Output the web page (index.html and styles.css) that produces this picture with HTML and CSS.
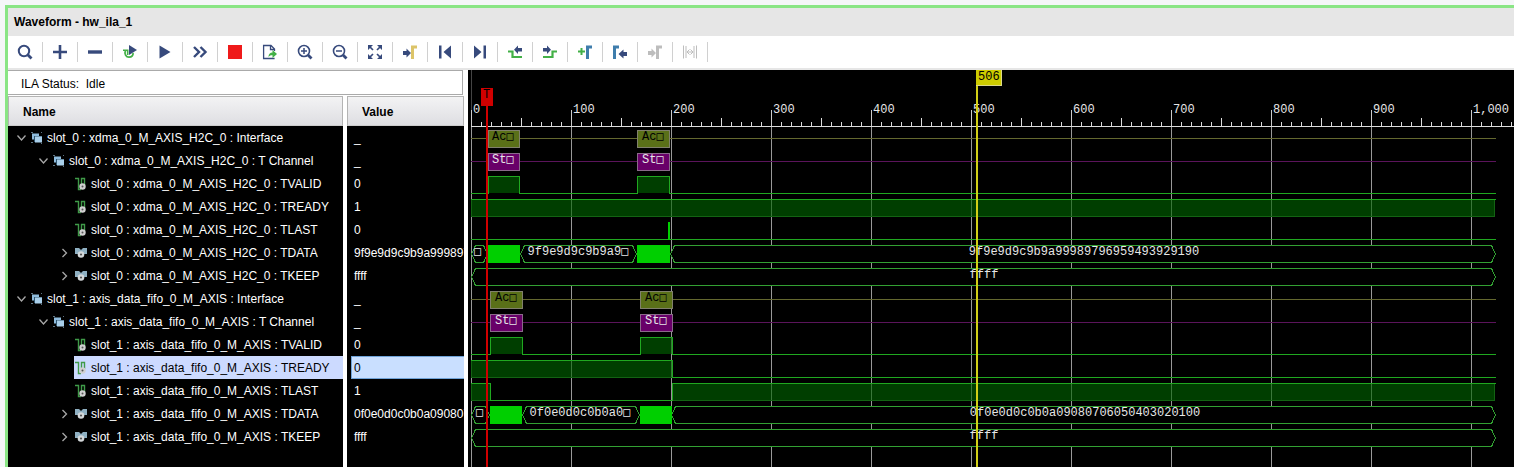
FILE: index.html
```html
<!DOCTYPE html>
<html lang="en">
<head>
<meta charset="utf-8">
<title>Waveform - hw_ila_1</title>
<link rel="stylesheet" href="styles.css">
</head>
<body>
<svg class="defs" aria-hidden="true">
  <symbol id="open" viewBox="0 0 14 14"><path d="M1.500 4.500 5.500 9 9.500 4.500" fill="none" stroke="#a8a8a8" stroke-width="1.300"/></symbol>
  <symbol id="closed" viewBox="0 0 14 14"><path d="M2.500 3 6.500 7 2.500 11" fill="none" stroke="#a8a8a8" stroke-width="1.300"/></symbol>
  <symbol id="group" viewBox="0 0 14 14">
    <path d="M1 1h2v1H1zM11 1h1v1h-1zM1 11h2v1H1zM11 12h1v1h-1z" fill="#5f7482"/>
    <rect x="2" y="2.500" width="7" height="6" fill="#8ebbdc"/>
    <path d="M4 5h8v1H5v5H4z" fill="#2f556f"/>
    <rect x="5" y="5.500" width="7" height="6" fill="#a9cfea"/>
  </symbol>
  <symbol id="signal" viewBox="0 0 14 14">
    <path d="M1 1.500H4.500V12.500H7M7.500 8V1.500h3V8" fill="none" stroke="#3f9a48" stroke-width="1.400"/>
    <circle cx="8.500" cy="9.500" r="3.200" fill="#d0d0d0"/><circle cx="8.500" cy="9.500" r="1" fill="#555"/>
  </symbol>
  <symbol id="bus" viewBox="0 0 14 14">
    <path d="M1 2h4l2 2 2-2h4v6H9l-1 3H6L4 8H1z" fill="#8fb0c2"/>
    <circle cx="7" cy="8.500" r="3.300" fill="#d4d8da"/><circle cx="7" cy="8.500" r="1.100" fill="#555"/>
  </symbol>
  <symbol id="edge" viewBox="0 0 16 16"><path d="M10.500 15V3H15" fill="none" stroke="currentColor" stroke-width="3"/></symbol>
  <symbol id="arrow" viewBox="0 0 16 16"><path d="M1 7h3.500V4.500L9 9l-4.500 4.500V11H1z" fill="currentColor"/></symbol>
</svg>

<main class="window">
  <h1 class="title">Waveform - hw_ila_1</h1>
  <ul class="toolbar">
    <li><button aria-label="Find"><svg viewBox="0 0 16 16"><circle cx="7" cy="7" r="5.200"/><path d="M10.500 10.500 14.500 14.500" stroke-width="2.800"/></svg></button></li>
    <li><button aria-label="Add"><svg viewBox="0 0 16 16"><path d="M1 8h14M8 1v14" stroke-width="2.600"/></svg></button></li>
    <li><button aria-label="Remove"><svg viewBox="0 0 16 16"><path d="M1 8h14" stroke-width="3.400"/></svg></button></li>
    <li><button aria-label="Auto re-trigger"><svg viewBox="0 0 16 16"><path class="solid" d="M7 1 15 6 7 11z"/><path class="green" d="M3.500 6.500C2 10 4 13.200 7 13.200S11.300 11 11 9" stroke-width="1.800"/><path class="green" d="M1 6.300h4.700V11" stroke-width="1.600"/></svg></button></li>
    <li><button aria-label="Run trigger"><svg viewBox="0 0 16 16"><path class="solid" d="M2.500 1.500 13.500 8 2.500 14.500z"/></svg></button></li>
    <li><button aria-label="Run immediate"><svg viewBox="0 0 16 16"><path d="M2 3 7 8 2 13M8.500 3l5 5-5 5" stroke-width="2.400"/></svg></button></li>
    <li><button aria-label="Stop trigger"><svg viewBox="0 0 16 16"><rect class="red" x="1" y="1" width="14" height="14"/></svg></button></li>
    <li><button aria-label="Export data"><svg viewBox="0 0 16 16"><path d="M12.500 7V5L9 1.500H1.600v13h11M8.500 1.500v4h4" stroke-width="1.300"/><path class="green-solid" d="M6.500 13c0-3 1.500-4.500 4-4.500V6l4.500 4-4.500 4v-2.700c-1.800 0-3 .4-4 1.700z"/></svg></button></li>
    <li><button aria-label="Zoom in"><svg viewBox="0 0 16 16"><circle cx="7" cy="7" r="5.500" stroke-width="1.600"/><path d="M4 7h6M7 4v6" stroke-width="1.500"/><path d="M11 11l3.500 3.500" stroke-width="2.800"/></svg></button></li>
    <li><button aria-label="Zoom out"><svg viewBox="0 0 16 16"><circle cx="7" cy="7" r="5.500" stroke-width="1.600"/><path d="M4 7h6" stroke-width="1.500"/><path d="M11 11l3.500 3.500" stroke-width="2.800"/></svg></button></li>
    <li><button aria-label="Zoom fit"><svg viewBox="0 0 16 16"><path d="M2 2l4 4M14 2l-4 4M2 14l4-4M14 14l-4-4" stroke-width="1.700"/><path class="solid" d="M1 1h5L1 6zM15 1h-5l5 5zM1 15h5L1 10zM15 15h-5l5-5z"/></svg></button></li>
    <li><button aria-label="Go to trigger"><svg viewBox="0 0 16 16"><use href="#arrow"/><use href="#edge" class="c-yellow"/></svg></button></li>
    <li><button aria-label="Go to start"><svg viewBox="0 0 16 16"><path class="solid" d="M2 1.500h2.500v13H2zM14 1.500v13L6.500 8z"/></svg></button></li>
    <li><button aria-label="Go to end"><svg viewBox="0 0 16 16"><path class="solid" d="M11.500 1.500H14v13h-2.500zM2 1.500v13L9.500 8z"/></svg></button></li>
    <li><button aria-label="Previous transition"><svg viewBox="0 0 16 16"><path class="green" d="M1 7.500h4.500V13H15" stroke-width="2.200"/><path class="solid" d="M15 4h-4V1.500L7 5.700l4 4.200V7.500h4z"/></svg></button></li>
    <li><button aria-label="Next transition"><svg viewBox="0 0 16 16"><path class="green" d="M1 13h9.500V7.500H15" stroke-width="2.200"/><path class="solid" d="M1 4h4V1.500l4 4.200-4 4.200V7.500H1z"/></svg></button></li>
    <li><button aria-label="Add marker"><svg viewBox="0 0 16 16"><path class="green" d="M1 7.500h7M4.500 4v7" stroke-width="2"/><use href="#edge" class="c-steel"/></svg></button></li>
    <li><button aria-label="Previous marker"><svg viewBox="0 0 16 16"><path class="steel" d="M2.500 15V3H7" stroke-width="3"/><path class="solid" d="M15 8h-3.500V5.500L6.500 10l5 4.500V12H15z"/></svg></button></li>
    <li><button aria-label="Next marker" disabled><svg viewBox="0 0 16 16"><use href="#arrow"/><use href="#edge"/></svg></button></li>
    <li><button aria-label="Swap cursors" disabled><svg viewBox="0 0 16 16"><path d="M1.500 1.500v13M4 2v12M14.500 1.500v13M12 2v12M5 8h6M7.500 5.500 5 8l2.500 2.500M8.500 5.500 11 8l-2.500 2.500" stroke-width="1"/></svg></button></li>
  </ul>

  <div class="content">
    <section class="names">
      <p class="status">ILA Status:&nbsp; Idle</p>
      <table>
        <colgroup><col class="name-col"><col></colgroup>
        <thead><tr><th><div>Name</div></th><th><div>Value</div></th></tr></thead>
        <tbody>
          <tr><td><div class="node l0"><svg><use href="#open"/></svg><span><svg><use href="#group"/></svg>slot_0 : xdma_0_M_AXIS_H2C_0 : Interface</span></div></td><td><div class="value">_</div></td></tr>
          <tr><td><div class="node l1"><svg><use href="#open"/></svg><span><svg><use href="#group"/></svg>slot_0 : xdma_0_M_AXIS_H2C_0 : T Channel</span></div></td><td><div class="value">_</div></td></tr>
          <tr><td><div class="node l2"><svg></svg><span><svg><use href="#signal"/></svg>slot_0 : xdma_0_M_AXIS_H2C_0 : TVALID</span></div></td><td><div class="value">0</div></td></tr>
          <tr><td><div class="node l2"><svg></svg><span><svg><use href="#signal"/></svg>slot_0 : xdma_0_M_AXIS_H2C_0 : TREADY</span></div></td><td><div class="value">1</div></td></tr>
          <tr><td><div class="node l2"><svg></svg><span><svg><use href="#signal"/></svg>slot_0 : xdma_0_M_AXIS_H2C_0 : TLAST</span></div></td><td><div class="value">0</div></td></tr>
          <tr><td><div class="node l2"><svg><use href="#closed"/></svg><span><svg><use href="#bus"/></svg>slot_0 : xdma_0_M_AXIS_H2C_0 : TDATA</span></div></td><td><div class="value">9f9e9d9c9b9a999897</div></td></tr>
          <tr><td><div class="node l2"><svg><use href="#closed"/></svg><span><svg><use href="#bus"/></svg>slot_0 : xdma_0_M_AXIS_H2C_0 : TKEEP</span></div></td><td><div class="value">ffff</div></td></tr>
          <tr><td><div class="node l0"><svg><use href="#open"/></svg><span><svg><use href="#group"/></svg>slot_1 : axis_data_fifo_0_M_AXIS : Interface</span></div></td><td><div class="value">_</div></td></tr>
          <tr><td><div class="node l1"><svg><use href="#open"/></svg><span><svg><use href="#group"/></svg>slot_1 : axis_data_fifo_0_M_AXIS : T Channel</span></div></td><td><div class="value">_</div></td></tr>
          <tr><td><div class="node l2"><svg></svg><span><svg><use href="#signal"/></svg>slot_1 : axis_data_fifo_0_M_AXIS : TVALID</span></div></td><td><div class="value">0</div></td></tr>
          <tr class="selected"><td><div class="node l2"><svg></svg><span><svg><use href="#signal"/></svg>slot_1 : axis_data_fifo_0_M_AXIS : TREADY</span></div></td><td><div class="value">0</div></td></tr>
          <tr><td><div class="node l2"><svg></svg><span><svg><use href="#signal"/></svg>slot_1 : axis_data_fifo_0_M_AXIS : TLAST</span></div></td><td><div class="value">1</div></td></tr>
          <tr><td><div class="node l2"><svg><use href="#closed"/></svg><span><svg><use href="#bus"/></svg>slot_1 : axis_data_fifo_0_M_AXIS : TDATA</span></div></td><td><div class="value">0f0e0d0c0b0a090807</div></td></tr>
          <tr><td><div class="node l2"><svg><use href="#closed"/></svg><span><svg><use href="#bus"/></svg>slot_1 : axis_data_fifo_0_M_AXIS : TKEEP</span></div></td><td><div class="value">ffff</div></td></tr>
          <tr class="rest"><td></td><td></td></tr>
        </tbody>
      </table>
    </section>

    <svg class="wave" role="img" aria-label="Captured waveform">
      <defs>
        <pattern id="minor" x="3" y="52" width="10" height="4" patternUnits="userSpaceOnUse"><rect width="1" height="4" fill="#ddd"/></pattern>
        <pattern id="half" x="3" y="48" width="50" height="8" patternUnits="userSpaceOnUse"><rect width="1" height="8" fill="#ddd"/></pattern>
        <pattern id="major" x="3" y="40" width="100" height="16" patternUnits="userSpaceOnUse"><rect width="1" height="16" fill="#ccc"/></pattern>
        <pattern id="grid" x="3" y="0" width="100" height="100" patternUnits="userSpaceOnUse"><rect width="1" height="100" fill="#999"/></pattern>
      </defs>
      <rect x="3" width="1" height="100%" fill="#444"/>
      <!-- ruler -->
      <rect x="3" y="52" width="100%" height="4" fill="url(#minor)"/>
      <rect x="3" y="48" width="100%" height="8" fill="url(#half)"/>
      <rect x="3" y="40" width="100%" height="16" fill="url(#major)"/>
      <rect x="3" y="56" width="100%" height="1" fill="#ddd"/>
      <rect x="3" y="57" width="100%" height="100%" fill="url(#grid)"/>
      <g class="ruler-text">
        <text x="5" y="43">0</text><text x="105" y="43">100</text><text x="205" y="43">200</text><text x="305" y="43">300</text><text x="405" y="43">400</text><text x="505" y="43">500</text><text x="605" y="43">600</text><text x="705" y="43">700</text><text x="805" y="43">800</text><text x="905" y="43">900</text><text x="1005" y="43">1,000</text>
      </g>
      <!-- slot_0 -->
      <g transform="translate(3 60)"><path class="olive-line" d="M0 8.500H1025"/><rect class="olive" x="17.500" y=".5" width="31" height="17"/><rect class="olive" x="166.500" y=".5" width="32" height="17"/><text class="dark" x="21" y="10">Ac<tspan class="box">□</tspan></text><text class="dark" x="171" y="10">Ac<tspan class="box">□</tspan></text></g>
      <g transform="translate(3 83)"><path class="purple-line" d="M0 8.500H1025"/><rect class="purple" x="17.500" y=".5" width="31" height="17"/><rect class="purple" x="166.500" y=".5" width="32" height="17"/><text x="21" y="10">St<tspan class="box">□</tspan></text><text x="171" y="10">St<tspan class="box">□</tspan></text></g>
      <g transform="translate(3 106)"><path class="high" d="M17 1h32v16H17zM166 1h32v16h-32z"/><path class="trace" d="M0 17.500H17.500V.5H48.500V17.500H166.500V.5H198.500V17.500H1025"/></g>
      <g transform="translate(3 129)"><path class="high" d="M0 0h1024v18H0z"/><path class="high-edge" d="M.5 0V17.500H1023.500V0"/><path class="trace" d="M0 .5H1025"/></g>
      <g transform="translate(3 152)"><path class="trace" d="M0 17.500H1025"/><rect class="dense" x="197" width="2" height="18"/></g>
      <g transform="translate(3 175)"><path class="bus" d="M.5 9 4.500.5H12.500L16.500 9 12.500 17.500H4.500z"/><path class="bus" d="M49.500 9 53.500.5H161.500L165.500 9 161.500 17.500H53.500z"/><path class="bus" d="M199.500 9 203.500.5H1020.500L1024.500 9 1020.500 17.500H203.500z"/><rect class="dense" x="16" width="33" height="18"/><rect class="dense" x="166" width="33" height="18"/><text x="3" y="10"><tspan class="box">□</tspan></text><text class="mid" x="107" y="10">9f9e9d9c9b9a9<tspan class="box">□</tspan></text><text class="mid" x="613" y="10">9f9e9d9c9b9a99989796959493929190</text></g>
      <g transform="translate(3 198)"><path class="bus" d="M.5 9 4.500.5H1020.500L1024.500 9 1020.500 17.500H4.500z"/><text class="mid" x="513" y="10">ffff</text></g>
      <!-- slot_1 -->
      <g transform="translate(3 221)"><path class="olive-line" d="M0 8.500H1025"/><rect class="olive" x="19.500" y=".5" width="32" height="17"/><rect class="olive" x="169.500" y=".5" width="32" height="17"/><text class="dark" x="24" y="10">Ac<tspan class="box">□</tspan></text><text class="dark" x="174" y="10">Ac<tspan class="box">□</tspan></text></g>
      <g transform="translate(3 244)"><path class="purple-line" d="M0 8.500H1025"/><rect class="purple" x="19.500" y=".5" width="32" height="17"/><rect class="purple" x="169.500" y=".5" width="32" height="17"/><text x="24" y="10">St<tspan class="box">□</tspan></text><text x="174" y="10">St<tspan class="box">□</tspan></text></g>
      <g transform="translate(3 267)"><path class="high" d="M19 1h32v16H19zM169 1h32v16h-32z"/><path class="trace" d="M0 17.500H19.500V.5H51.500V17.500H169.500V.5H201.500V17.500H1025"/></g>
      <g transform="translate(3 290)"><path class="high" d="M0 0h201v18H0z"/><path class="high-edge" d="M.5 0V17.500H201"/><path class="trace" d="M0 .5H201.500V17.500H1025"/></g>
      <g transform="translate(3 313)"><path class="high" d="M0 0h19v18H0zM201 0h823v18H201z"/><path class="high-edge" d="M.5 0V17.500H19M201 17.500H1023.500V0"/><path class="trace" d="M0 .5H19.500V17.500H201.500V.5H1025"/></g>
      <g transform="translate(3 336)"><path class="bus" d="M.5 9 4.500.5H14.500L18.500 9 14.500 17.500H4.500z"/><path class="bus" d="M51.500 9 55.500.5H164.500L168.500 9 164.500 17.500H55.500z"/><path class="bus" d="M200.500 9 204.500.5H1020.500L1024.500 9 1020.500 17.500H204.500z"/><rect class="dense" x="19" width="32" height="18"/><rect class="dense" x="169" width="32" height="18"/><text x="5" y="10"><tspan class="box">□</tspan></text><text class="mid" x="109" y="10">0f0e0d0c0b0a0<tspan class="box">□</tspan></text><text class="mid" x="614" y="10">0f0e0d0c0b0a09080706050403020100</text></g>
      <g transform="translate(3 359)"><path class="bus" d="M.5 9 4.500.5H1020.500L1024.500 9 1020.500 17.500H4.500z"/><text class="mid" x="513" y="10">ffff</text></g>
      <!-- trigger and cursor -->
      <rect x="18" y="18" width="2" height="100%" fill="#d00000"/>
      <rect x="13" y="18" width="12" height="18" fill="#d00000"/><text class="dark" x="15" y="28">T</text>
      <rect x="508" width="2" height="100%" fill="#d2cf16"/>
      <path d="M508 0h26v16h-26z" fill="#dcd98a"/><path d="M508 0h25v15h-25z" fill="#cdcb00"/><text class="dark" x="510" y="10">506</text>
    </svg>
  </div>
</main>
</body>
</html>
```
FILE: styles.css
```css
* { box-sizing: border-box; }
body {
  margin: 0;
  height: 100vh;
  padding: 5px 0 0 5px;
  overflow: hidden;
  background: #f5f6f8;
  color: #000;
  font: 12px/16px "Liberation Sans", Arial, sans-serif;
}
.defs { position: absolute; width: 0; height: 0; }
.window {
  display: flex;
  flex-direction: column;
  height: 100%;
  border: solid #8ae585;
  border-width: 3px 0 0 3px;
  background: #fff;
}
.title {
  margin: 0;
  padding: 6px 6px;
  background: #e6e6e6;
  font-size: 12px;
  line-height: 16px;
}
.toolbar {
  display: flex;
  flex: none;
  margin: 0;
  padding: 0;
  list-style: none;
  border-bottom: 2px solid #e6e6e6;
}
.toolbar li { display: flex; align-items: center; }
.toolbar li::after { content: ""; width: 1px; height: 20px; background: #d0d0d0; }
.toolbar button {
  display: grid;
  place-items: center;
  width: 34px;
  height: 32px;
  padding: 0;
  border: 0;
  background: none;
  color: #374a7c;
}
.toolbar button:disabled { color: #bdbdbd; }
.toolbar svg { width: 16px; height: 16px; fill: none; stroke: currentColor; stroke-width: 2; }
.toolbar .solid { fill: currentColor; stroke: none; }
.toolbar use { stroke: none; }
.toolbar .green { stroke: #43b047; }
.toolbar .green-solid { fill: #43b047; stroke: none; }
.toolbar .steel { stroke: #3f7dac; }
.toolbar .red { fill: #ef1a1a; stroke: none; }
.c-yellow { color: #dcc469; }
.c-steel { color: #3f7dac; }

.content { display: flex; flex: 1; min-height: 0; }
.names { display: flex; flex-direction: column; flex: none; width: 460px; }
.status {
  flex: none;
  margin: 0 5px 1px 0;
  padding: 5px 13px 2px;
  border: 1px solid #aaa;
  border-left: 0;
}
table {
  flex: 1;
  width: 100%;
  table-layout: fixed;
  border-collapse: separate;
  border-spacing: 0;
}
.name-col { width: 339px; }
th, td { padding: 0; border-right: 4px solid #fff; text-align: left; }
th div {
  height: 30px;
  padding: 7px 14px;
  border: 1px solid #b4b4b4;
  border-bottom-color: #ccc;
  background: linear-gradient(#f3f3f4, #dedee2);
}
td { background: #000; color: #fff; }
.node { display: flex; height: 23px; align-items: stretch; white-space: nowrap; }
.node svg { flex: none; align-self: center; width: 14px; height: 14px; }
.node span { display: flex; flex: 1; align-items: center; gap: 3px; }
.l0 { padding-left: 8px; }
.l1 { padding-left: 30px; }
.l2 { padding-left: 52px; }
.value {
  height: 23px;
  margin-left: 4px;
  padding: 3px 2px;
  border: 1px solid transparent;
  border-right: 0;
  overflow: hidden;
  white-space: nowrap;
}
.selected span { background: #ccdaff; color: #000; }
.selected .value { background: #c9dfff; border-color: #6fa3d8; color: #000; }
.rest td { height: 100%; }

.wave { flex: 1; min-width: 0; height: 100%; background: #000; shape-rendering: crispEdges; }
.wave text { fill: #e6e6e6; font: 12px "Liberation Mono", "Courier New", monospace; }
.wave .box { font-family: "DejaVu Sans Mono", monospace; }
.wave .dark { fill: #000; }
.wave .mid { text-anchor: middle; }
.olive-line { stroke: #64682f; }
.purple-line { stroke: #5b145b; }
.olive { fill: #5a7018; stroke: #80806c; }
.purple { fill: #690069; stroke: #8a6a8a; }
.high { fill: #006400; fill-opacity: .62; }
.high-edge { fill: none; stroke: #136313; }
.trace { fill: none; stroke: #20a820; }
.dense { fill: #00cf00; }
.bus { fill: #000; stroke: #32a032; }
```
